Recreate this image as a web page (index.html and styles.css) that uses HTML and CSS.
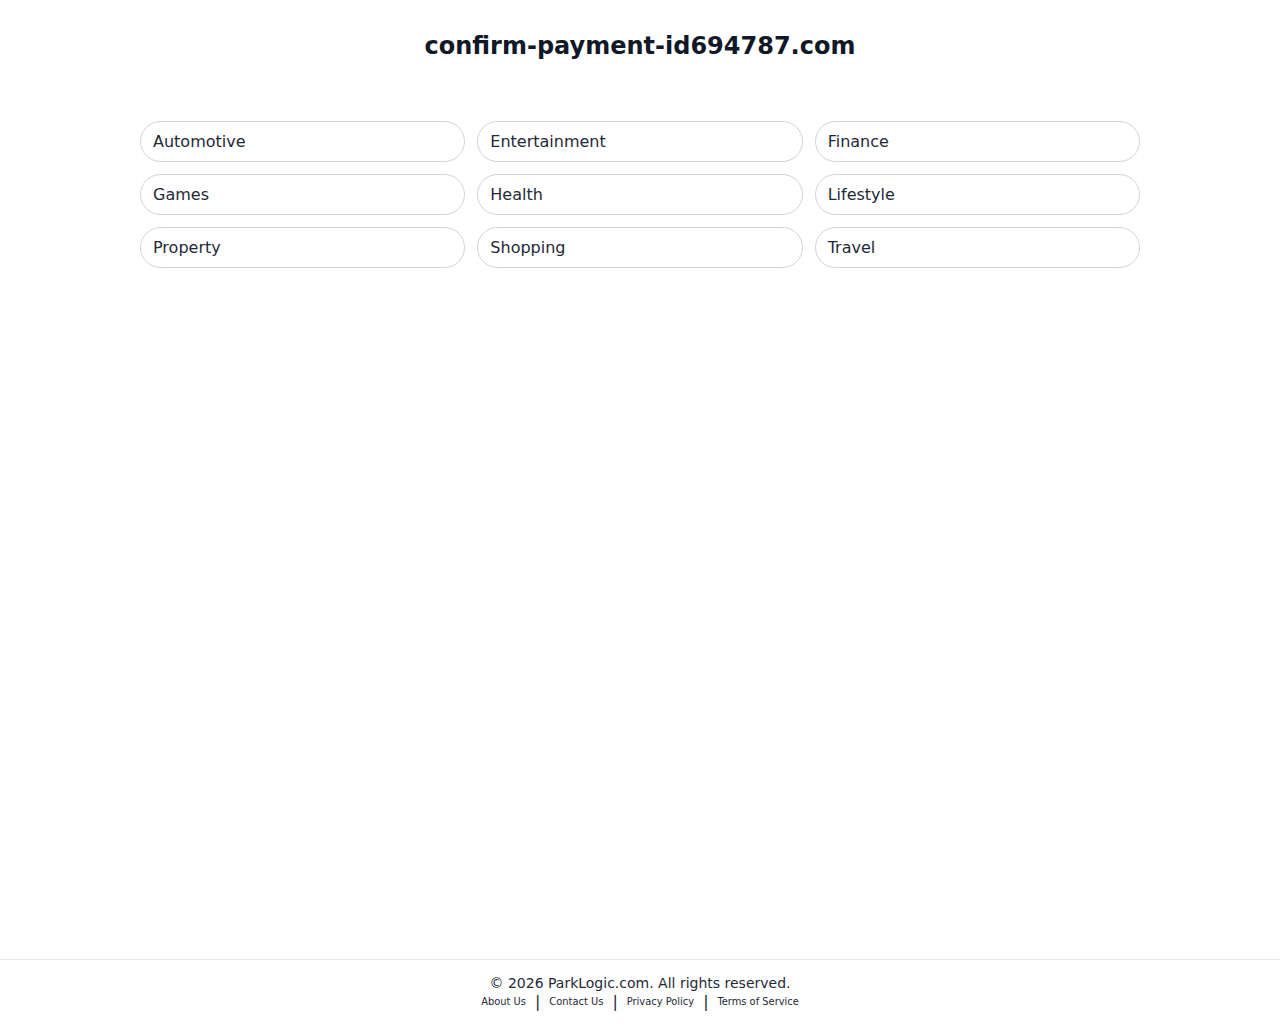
FILE: index.html
```html
<!DOCTYPE html>
<html lang="en">
<head>
  <meta charset="UTF-8" />
  <meta name="viewport" content="width=device-width, initial-scale=1.0" />
  <title>confirm-payment-id694787.com</title>
  <link rel="stylesheet" href="styles.css">
</head>
<body>
  <div class="page">
    <header class="top">
      <h1>confirm-payment-id694787.com</h1>
    </header>

    <main class="categories">
      <a class="pill" href="#">Automotive</a>
      <a class="pill" href="#">Entertainment</a>
      <a class="pill" href="#">Finance</a>
      <a class="pill" href="#">Games</a>
      <a class="pill" href="#">Health</a>
      <a class="pill" href="#">Lifestyle</a>
      <a class="pill" href="#">Property</a>
      <a class="pill" href="#">Shopping</a>
      <a class="pill" href="#">Travel</a>
    </main>

    <footer>
      <p class="copy">&copy; 2026 ParkLogic.com. All rights reserved.</p>
      <div class="links">
        <a href="#">About Us</a>
        <span class="sep">|</span>
        <a href="#">Contact Us</a>
        <span class="sep">|</span>
        <a href="#">Privacy Policy</a>
        <span class="sep">|</span>
        <a href="#">Terms of Service</a>
      </div>
    </footer>
  </div>
</body>
</html>
```

FILE: styles.css
```css
body {
  font-family: 'DejaVu Sans', sans-serif;
  margin: 0;
  padding: 0;
  background-color: white;
  color: #111827;
}
.page {
  min-height: 100vh;
  display: flex;
  flex-direction: column;
}
.top {
  padding-top: 28px;
  text-align: center;
}
.top h1 {
  margin: 0;
  font-size: 24px;
  line-height: 36px;
  font-weight: bold;
  color: #111827;
}
.categories {
  flex: 1;
  width: 1000px;
  margin: 57px auto 0;
  display: grid;
  grid-template-columns: repeat(3, 1fr);
  grid-auto-rows: 41px;
  align-content: start;
  gap: 12px;
}
.pill {
  display: flex;
  align-items: center;
  box-sizing: border-box;
  padding: 0 12px;
  border: 1px solid #d4d4d4;
  border-radius: 21px;
  font-size: 16px;
  color: #1f2937;
  text-decoration: none;
}
footer {
  border-top: 1px solid #e5e7eb;
  padding: 13px 0 15px;
  text-align: center;
}
.copy {
  margin: 0;
  font-size: 14px;
  line-height: 20px;
  color: #1f2937;
}
.links {
  display: flex;
  justify-content: center;
  align-items: center;
  gap: 9px;
  height: 16px;
  font-size: 11px;
  font-family: 'DejaVu Sans Condensed', 'DejaVu Sans', sans-serif;
  font-stretch: condensed;
}
.links a {
  color: #1f2937;
  text-decoration: none;
}
.sep {
  font-size: 16px;
  font-family: 'DejaVu Sans', sans-serif;
  font-stretch: normal;
  color: #1f2937;
}
```
